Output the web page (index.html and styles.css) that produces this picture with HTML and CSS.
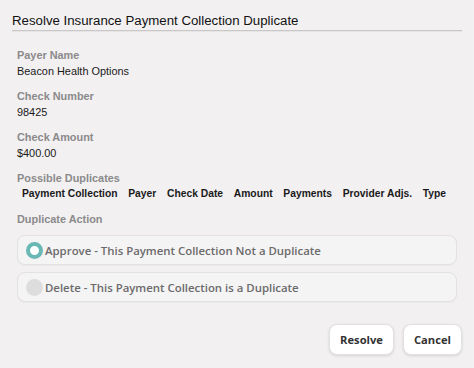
FILE: index.html
```html
<!DOCTYPE html>
<html>
<head>
<meta charset="utf-8">
<link rel="stylesheet" href="styles.css">
</head>
<body>
<div class="dialog">
  <h1 class="title">Resolve Insurance Payment Collection Duplicate</h1>
  <div class="content">
    <div class="field">
      <div class="label">Payer Name</div>
      <div class="value">Beacon Health Options</div>
    </div>
    <div class="field">
      <div class="label">Check Number</div>
      <div class="value">98425</div>
    </div>
    <div class="field">
      <div class="label">Check Amount</div>
      <div class="value">$400.00</div>
    </div>
    <div class="field">
      <div class="label">Possible Duplicates</div>
      <div class="table-head">
        <span>Payment Collection</span>
        <span>Payer</span>
        <span>Check Date</span>
        <span>Amount</span>
        <span>Payments</span>
        <span>Provider Adjs.</span>
        <span>Type</span>
      </div>
    </div>
    <div class="field">
      <div class="label">Duplicate Action</div>
      <div class="options">
        <label class="option"><span class="radio checked"></span>Approve - This Payment Collection Not a Duplicate</label>
        <label class="option"><span class="radio"></span>Delete - This Payment Collection is a Duplicate</label>
      </div>
    </div>
  </div>
  <div class="actions">
    <button class="btn">Resolve</button>
    <button class="btn">Cancel</button>
  </div>
</div>
</body>
</html>
```
FILE: styles.css
```css
html, body {
  margin: 0;
  padding: 0;
  background: #f2f0f1;
}
.dialog {
  width: 474px;
  height: 368px;
  box-sizing: border-box;
  padding: 0 12px 0 12px;
  font-family: "Liberation Sans", Arial, sans-serif;
}
.title {
  margin: 0;
  padding-top: 12px;
  height: 18px;
  font-size: 13.25px;
  font-weight: normal;
  color: #111;
  line-height: 17px;
  border-bottom: 1px solid #c9c7c8;
  box-shadow: 0 1px 0 #e6e4e5;
}
.content {
  padding: 16px 5px 0 5px;
}
.field {
  margin-bottom: 9px;
}
.label {
  font-size: 10.9px;
  font-weight: bold;
  color: #8b8a8b;
  line-height: 16px;
}
.value {
  font-size: 10.9px;
  color: #1a1a1a;
  line-height: 16px;
}
.table-head {
  display: flex;
  gap: 10.7px;
  padding-left: 5px;
  font-size: 10.3px;
  font-weight: bold;
  color: #1a1a1a;
  line-height: 16px;
  white-space: nowrap;
}
.options {
  display: flex;
  flex-direction: column;
  gap: 7px;
  margin-top: 8px;
}
.option {
  display: flex;
  align-items: center;
  height: 28px;
  border: 1px solid #e3e1e2;
  border-radius: 8px;
  background: #f5f4f4;
  padding-left: 8px;
  font-family: "Open Sans", sans-serif;
  font-weight: 600;
  font-size: 11.4px;
  color: #6b6a6b;
  box-shadow: 0 1px 1px rgba(0,0,0,0.03);
}
.radio {
  width: 17px;
  height: 17px;
  border-radius: 50%;
  background: #dedddd;
  box-sizing: border-box;
  margin-right: 2px;
}
.radio.checked {
  background: #fff;
  border: 4px solid #6ab8b6;
}
.actions {
  display: flex;
  justify-content: flex-end;
  gap: 9px;
  margin-top: 22px;
}
.btn {
  height: 31px;
  border: 1px solid #e2e0e1;
  border-radius: 8px;
  background: #fff;
  font-family: "Open Sans", sans-serif;
  font-weight: 700;
  font-size: 11.2px;
  color: #333;
  padding: 0 10px;
  box-shadow: 0 1px 3px rgba(0,0,0,0.12);
}
```
